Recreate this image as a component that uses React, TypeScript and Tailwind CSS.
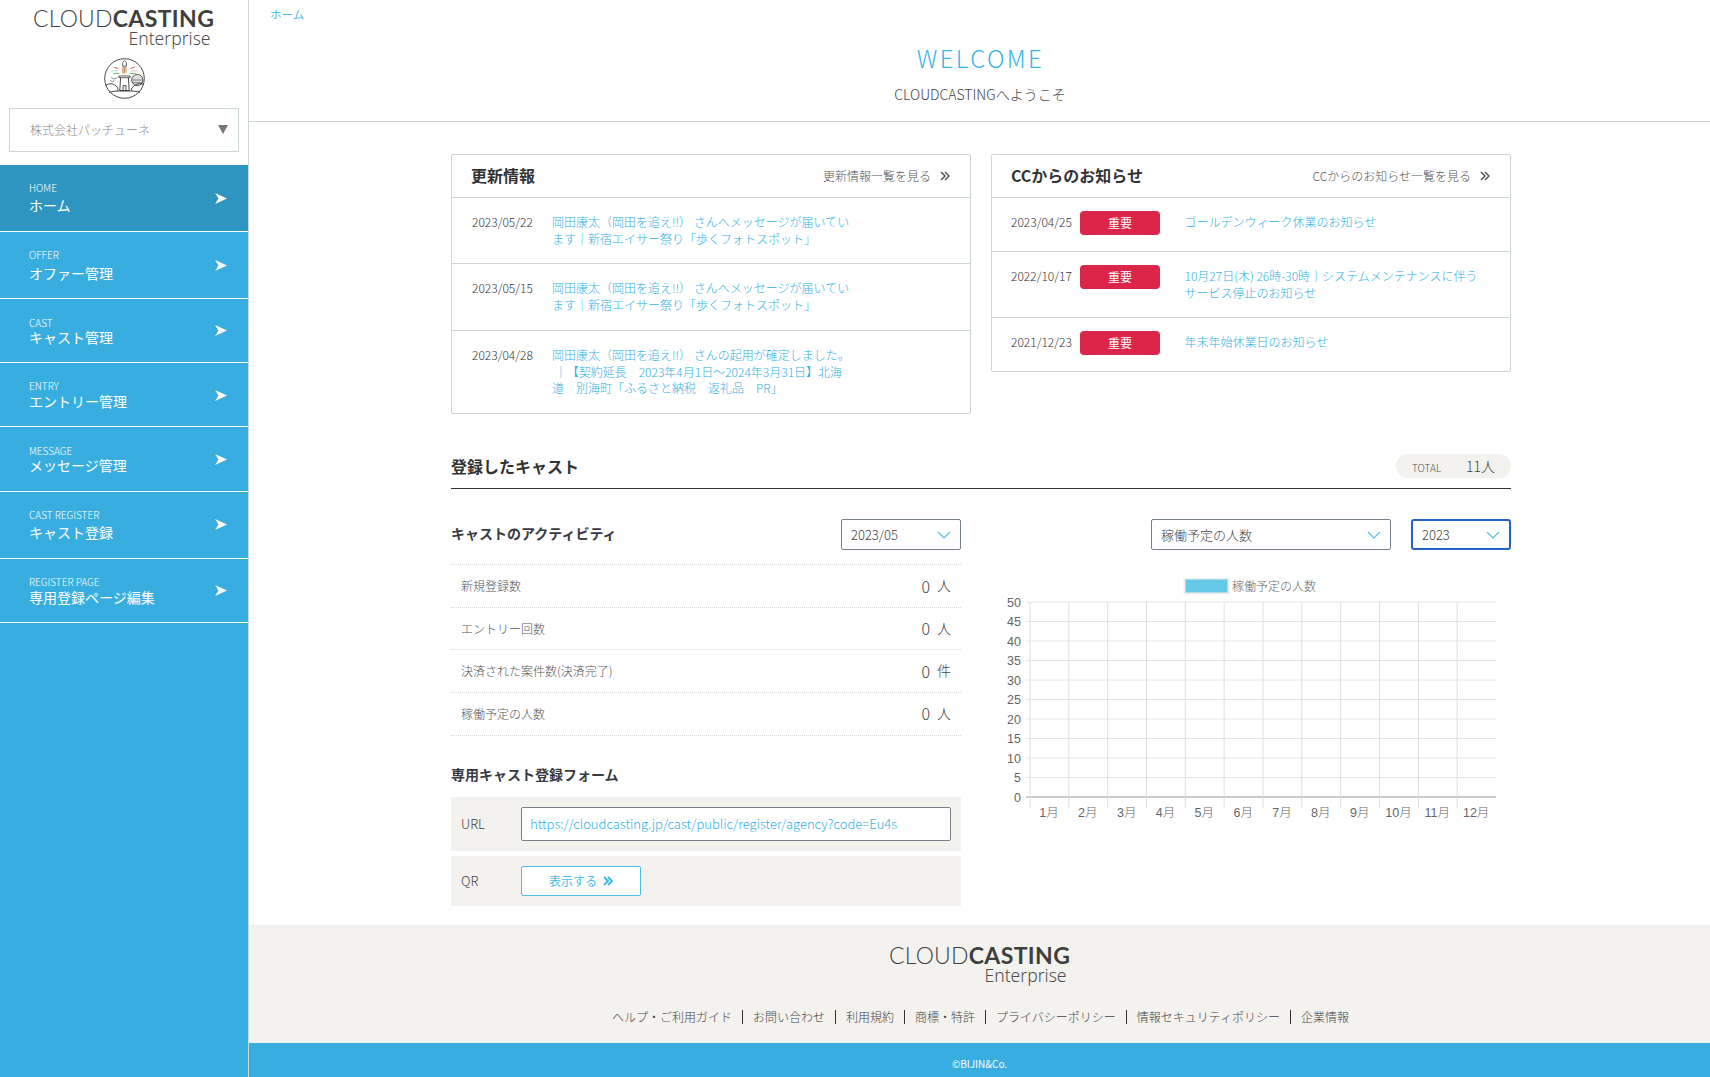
import React from "react";

const nav = [
  { en: "HOME", jp: "ホーム", cls: "h-[67px] bg-[#2e95c0] pt-[16px]", gap: "mt-[0px]", arrow: "mt-[12px]" },
  { en: "OFFER", jp: "オファー管理", cls: "h-[67px] pt-[16px]", gap: "mt-[1px]", arrow: "mt-[12px]" },
  { en: "CAST", jp: "キャスト管理", cls: "h-[64px] pt-[17px]", gap: "mt-[-3px]", arrow: "mt-[9px]" },
  { en: "ENTRY", jp: "エントリー管理", cls: "h-[64px] pt-[16px]", gap: "mt-[-2px]", arrow: "mt-[11px]" },
  { en: "MESSAGE", jp: "メッセージ管理", cls: "h-[65px] pt-[17px]", gap: "mt-[-3px]", arrow: "mt-[10px]" },
  { en: "CAST REGISTER", jp: "キャスト登録", cls: "h-[67px] pt-[16px]", gap: "mt-[0px]", arrow: "mt-[11px]" },
  { en: "REGISTER PAGE", jp: "専用登録ページ編集", cls: "h-[64px] pt-[16px]", gap: "mt-[-2px]", arrow: "mt-[10px]" },
];

function Logo() {
  return (
    <div className="flex w-[181px] flex-col items-end font-['Lato','Noto_Sans',sans-serif] text-[#3f3f3d]">
      <div className="flex h-[18px] items-center whitespace-nowrap text-[23px] leading-[18px]">
        <span className="font-light tracking-[0.2px]">CLOUD</span>
        <span className="font-bold tracking-[0.4px]">CASTING</span>
        <span className="mt-[10px] text-[5px] leading-[5px]">.</span>
      </div>
      <div className="mt-[2px] pr-[5px] font-['Noto_Sans',sans-serif] text-[17.5px] leading-[18px] text-[#4d4d4d]">Enterprise</div>
    </div>
  );
}

function Lighthouse() {
  return (
    <svg viewBox="0 0 40 40" className="h-[41px] w-[41px]" fill="none">
      <circle cx="20" cy="20" r="19.3" stroke="#222" strokeWidth="0.8" />
      <path d="M18.200 8V4.500L20 2.500l1.800 2V8z" stroke="#222" strokeWidth="0.7" />
      <path d="M17.500 9h5v6h-5z" fill="#e8d3b4" />
      <path d="M18.500 15V9.500h3M20 9.500V15M20 12h2" stroke="#b98a4e" strokeWidth="0.7" />
      <path d="M14.500 17.500h11v1.700h-11z" stroke="#222" strokeWidth="0.7" />
      <path d="M16.200 19.200l-.8 12.800h9.200l-.8-12.800M18.600 32v-5h2.800v5" stroke="#222" strokeWidth="0.8" />
      <path d="M10 9l4 1.200M30 9l-4 1.200" stroke="#e0473d" strokeWidth="0.9" />
      <path d="M7 12.500h7M26 12.500h7" stroke="#bbb" strokeWidth="0.7" />
      <path d="M9 15h6M25 15h6" stroke="#5ab56e" strokeWidth="0.9" />
      <circle cx="32.500" cy="21.500" r="5.500" fill="#ddd" stroke="#222" strokeWidth="0.7" />
      <path d="M27.500 21.500h10M28 24h9" stroke="#555" strokeWidth="0.6" />
      <path d="M7 19l3 1.500 3-1.500M6 22l2 1 2-1" stroke="#444" strokeWidth="0.6" />
      <path d="M1.500 27c4-3 7-2 10 0 2 1.500 3 4 1 5M38.500 26c-3-2-7-1-10 2-2 1.500-2 3-1 4M5 33.500c4-2 26-2 30 0" stroke="#222" strokeWidth="0.8" />
    </svg>
  );
}

function NavArrow() {
  return (
    <svg viewBox="0 0 12 11" className="h-[11px] w-[12px]" fill="#fff">
      <path d="M0 0l12 5.500L0 11l3.500-5.500z" />
    </svg>
  );
}

function Chevrons({ stroke = "#555", w = 1.5 }: { stroke?: string; w?: number }) {
  return (
    <svg viewBox="0 0 10 10" className="h-[10px] w-[10px]" fill="none" stroke={stroke} strokeWidth={w}>
      <path d="M1 1l4 4-4 4M5 1l4 4-4 4" />
    </svg>
  );
}

function Select({ label, cls, blue }: { label: string; cls: string; blue?: boolean }) {
  return (
    <div
      className={`flex h-[31px] items-center justify-between bg-white pl-[9px] pr-[9px] text-[13px] text-[#444] ${cls} ${
        blue ? "rounded-[3px] border-2 border-[#2462c8]" : "rounded-[2px] border border-[#757f8a]"
      }`}
    >
      <span>{label}</span>
      <svg viewBox="0 0 14 8" className="h-[8px] w-[14px]" fill="none" stroke="#4fbde6" strokeWidth="1.1">
        <path d="M1 1l6 6 6-6" />
      </svg>
    </div>
  );
}

function CardHeader({ title, more }: { title: string; more: string }) {
  return (
    <div className="flex h-[43px] items-center justify-between border-b border-[#ccd6d8] pl-[19px] pr-[20px]">
      <span className="-mt-[3px] text-[16px] font-bold text-[#333]">{title}</span>
      <span className="flex items-center gap-[9px] text-[12px] text-[#555]">
        {more}
        <Chevrons />
      </span>
    </div>
  );
}

function UpdateRow({ date, lines, cls }: { date: string; lines: string[]; cls: string }) {
  return (
    <div className={`flex pl-[20px] text-[12px] leading-[16.5px] ${cls}`}>
      <span className="w-[80px] shrink-0 text-[#333]">{date}</span>
      <a className="text-[#2fb2e6]">
        {lines.map((l) => (
          <span key={l} className="block whitespace-pre">
            {l}
          </span>
        ))}
      </a>
    </div>
  );
}

function NoticeRow({ date, lines, cls }: { date: string; lines: string[]; cls: string }) {
  return (
    <div className={`flex pl-[19px] pt-[13px] text-[12px] leading-[16.5px] ${cls}`}>
      <span className="w-[69px] shrink-0 pt-[3px] text-[#333]">{date}</span>
      <span className="mr-[24.500px] flex h-[24px] w-[80px] shrink-0 items-center justify-center rounded-[4px] bg-[#dc2649] font-normal text-white">重要</span>
      <a className="pt-[3px] text-[#2fb2e6]">
        {lines.map((l) => (
          <span key={l} className="block whitespace-pre">
            {l}
          </span>
        ))}
      </a>
    </div>
  );
}

const stats = [
  ["新規登録数", "0", "人", "h-[43px]"],
  ["エントリー回数", "0", "人", "h-[42px]"],
  ["決済された案件数(決済完了)", "0", "件", "h-[43px]"],
  ["稼働予定の人数", "0", "人", "h-[43px] pb-[1px]"],
];

function Chart() {
  const left = 38;
  const right = 504;
  const top = 24;
  const bottom = 219;
  const ys = Array.from({ length: 11 }, (_, i) => top + (i * (bottom - top)) / 10);
  const xs = Array.from({ length: 12 }, (_, i) => left + (i * (right - left)) / 12);
  return (
    <svg viewBox="0 0 519 245" className="h-[245px] w-[519px]">
      <rect x="192.500" y="0.500" width="44" height="15" fill="#66c9e8" stroke="#eee" strokeWidth="2" />
      <text x="240" y="13" fontSize="12" fill="#666" fontFamily="'Noto Sans CJK JP',sans-serif">稼働予定の人数</text>
      {ys.map((y, i) => (
        <g key={y}>
          <line x1={left - 4} x2={right} y1={y} y2={y} stroke={i === 10 ? "#999" : "#e6e6e6"} strokeWidth="1" />
          <text x={left - 9} y={y + 4.500} fontSize="12.500" fill="#666" textAnchor="end" fontFamily="'Liberation Sans',sans-serif">
            {50 - i * 5}
          </text>
        </g>
      ))}
      {xs.map((x) => (
        <line key={x} x1={x} x2={x} y1={top} y2={bottom + 11} stroke="#dfdfdf" strokeWidth="1" />
      ))}
      {xs.map((x, i) => (
        <text key={x} x={x + 19} y={bottom + 20} fontSize="12.500" fill="#666" textAnchor="middle" fontFamily="'Liberation Sans','Noto Sans CJK JP',sans-serif">
          {i + 1}月
        </text>
      ))}
    </svg>
  );
}

const footerLinks = ["ヘルプ・ご利用ガイド", "お問い合わせ", "利用規約", "商標・特許", "プライバシーポリシー", "情報セキュリティポリシー", "企業情報"];

export default function App() {
  return (
    <div className="flex min-h-[1077px] w-full bg-white font-['Noto_Sans_CJK_JP','Noto_Sans',sans-serif] font-light text-[#333]">
      <aside className="flex w-[249px] shrink-0 flex-col border-r border-[#ccd6d8] bg-[#38aee0]">
        <div className="bg-white pb-[13px]">
          <div className="flex justify-center pl-[2px] pt-[9px]">
            <Logo />
          </div>
          <div className="mt-[11px] flex justify-center">
            <Lighthouse />
          </div>
          <div className="mx-[9px] mt-[9px] flex h-[44px] items-center justify-between border border-[#ccd6d8] pl-[20px] pr-[10px] pb-[1px] text-[12px] text-[#888]">
            <span>株式会社パッチューネ</span>
            <span className="h-0 w-0 border-x-[5px] border-t-[9px] border-x-transparent border-t-[#777]" />
          </div>
        </div>
        <nav className="flex flex-col">
          {nav.map((n) => (
            <a key={n.en} className={`flex justify-between border-b border-white pl-[29px] pr-[21px] text-white ${n.cls}`}>
              <span className="flex flex-col">
                <span className="text-[10px] leading-[14px]">{n.en}</span>
                <span className={`text-[14px] font-normal leading-[20px] ${n.gap}`}>{n.jp}</span>
              </span>
              <span className={n.arrow}>
                <NavArrow />
              </span>
            </a>
          ))}
        </nav>
      </aside>

      <main className="flex min-w-0 flex-1 flex-col">
        <header className="h-[122px] border-b border-[#ccd6d8] text-center">
          <div className="pl-[21px] pt-[7px] text-left text-[11.500px] font-normal leading-[14px] text-[#4abde8]">ホーム</div>
          <h1 className="mt-[20px] pl-[2px] text-[24px] font-light leading-[34px] tracking-[0.1em] text-[#36b5e6]">WELCOME</h1>
          <p className="mt-[9px] pl-[1px] text-[14px] leading-[20px] text-[#444]">CLOUDCASTINGへようこそ</p>
        </header>

        <div className="ml-[202px] flex w-[1060px] flex-col pt-[32px]">
          <div className="flex items-start gap-[20px]">
            <section className="w-[520px] rounded-[2px] border border-[#ccd6d8]">
              <CardHeader title="更新情報" more="更新情報一覧を見る" />
              <UpdateRow
                cls="h-[66px] border-b border-[#ccd6d8] pt-[16px]"
                date="2023/05/22"
                lines={["岡田康太（岡田を追え!!） さんへメッセージが届いてい", "ます｜新宿エイサー祭り「歩くフォトスポット」"]}
              />
              <UpdateRow
                cls="h-[67px] border-b border-[#ccd6d8] pt-[16px]"
                date="2023/05/15"
                lines={["岡田康太（岡田を追え!!） さんへメッセージが届いてい", "ます｜新宿エイサー祭り「歩くフォトスポット」"]}
              />
              <UpdateRow
                cls="h-[82px] pt-[16px]"
                date="2023/04/28"
                lines={["岡田康太（岡田を追え!!） さんの起用が確定しました。", " ｜【契約延長　2023年4月1日～2024年3月31日】北海", "道　別海町「ふるさと納税　返礼品　PR」"]}
              />
            </section>
            <section className="w-[520px] rounded-[2px] border border-[#ccd6d8]">
              <CardHeader title="CCからのお知らせ" more="CCからのお知らせ一覧を見る" />
              <NoticeRow cls="h-[54px] border-b border-[#ccd6d8]" date="2023/04/25" lines={["ゴールデンウィーク休業のお知らせ"]} />
              <NoticeRow cls="h-[66px] border-b border-[#ccd6d8]" date="2022/10/17" lines={["10月27日(木) 26時-30時｜システムメンテナンスに伴う", "サービス停止のお知らせ"]} />
              <NoticeRow cls="h-[53px]" date="2021/12/23" lines={["年末年始休業日のお知らせ"]} />
            </section>
          </div>

          <div className="mt-[40px] flex h-[35px] items-start justify-between border-b border-[#333]">
            <h2 className="mt-[0px] text-[16px] font-bold leading-[24px]">登録したキャスト</h2>
            <div className="flex h-[24px] w-[115px] items-center justify-between rounded-full bg-[#f3f2ee] pl-[16px] pr-[16px]">
              <span className="mt-[2px] text-[10px] text-[#555]">TOTAL</span>
              <span className="text-[14px] text-[#444]">11人</span>
            </div>
          </div>

          <div className="flex justify-between pt-[30px]">
            <div className="w-[510px]">
              <div className="flex h-[31px] items-center justify-between">
                <h3 className="-mt-[3px] text-[14px] font-bold text-[#3a3a44]">キャストのアクティビティ</h3>
                <Select label="2023/05" cls="w-[120px]" />
              </div>
              <div className="mt-[14px] border-t border-dotted border-[#d5d8da]">
                {stats.map(([label, v, u, h]) => (
                  <div key={label} className={`flex items-center justify-between border-b border-dotted border-[#d5d8da] pl-[10px] pr-[10px] ${h}`}>
                    <span className="text-[12px] text-[#555]">{label}</span>
                    <span className="-mt-[1px] flex items-center gap-[7px] text-[14px] text-[#444]">
                      <span className="text-[16px]">{v}</span>
                      <span>{u}</span>
                    </span>
                  </div>
                ))}
              </div>
              <h3 className="mt-[28px] text-[14px] font-bold leading-[20px] text-[#3a3a44]">専用キャスト登録フォーム</h3>
              <div className="mt-[13px] flex h-[54px] items-center bg-[#f3f2ee] px-[10px]">
                <span className="w-[60px] text-[13px] text-[#444]">URL</span>
                <div className="flex h-[34px] w-[430px] items-center rounded-[2px] border border-[#757f8a] bg-white pl-[8px] text-[13px] text-[#2fb2e6]">
                  https://cloudcasting.jp/cast/public/register/agency?code=Eu4s
                </div>
              </div>
              <div className="mt-[5px] flex h-[50px] items-center bg-[#f3f2ee] px-[10px]">
                <span className="w-[60px] text-[13px] text-[#444]">QR</span>
                <div className="flex h-[30px] w-[120px] items-center justify-center gap-[6px] rounded-[2px] border border-[#4fbde6] bg-white text-[12px] font-normal text-[#4abde8]">
                  表示する
                  <Chevrons stroke="#36b5e6" w={1.8} />
                </div>
              </div>
            </div>
            <div className="w-[519px]">
              <div className="flex justify-end gap-[20px]">
                <Select label="稼働予定の人数" cls="w-[240px]" />
                <Select label="2023" cls="w-[100px]" blue />
              </div>
              <div className="mt-[28px]">
                <Chart />
              </div>
            </div>
          </div>
        </div>

        <footer className="mt-auto">
          <div className="flex h-[118px] flex-col items-center bg-[#f3f2ee] pt-[21px]">
            <div className="pl-[3px]">
              <Logo />
            </div>
            <ul className="mt-[26px] flex items-center pl-[2px] text-[12px] leading-[14px] text-[#444]">
              {footerLinks.map((l, i) => (
                <li key={l} className={i ? "ml-[10px] border-l border-[#333] pl-[10px]" : ""}>
                  {l}
                </li>
              ))}
            </ul>
          </div>
          <div className="flex h-[34px] items-center justify-center bg-[#38aee0] pt-[6px] text-[10px] font-normal text-white">©BIJIN&amp;Co.</div>
        </footer>
      </main>
    </div>
  );
}
